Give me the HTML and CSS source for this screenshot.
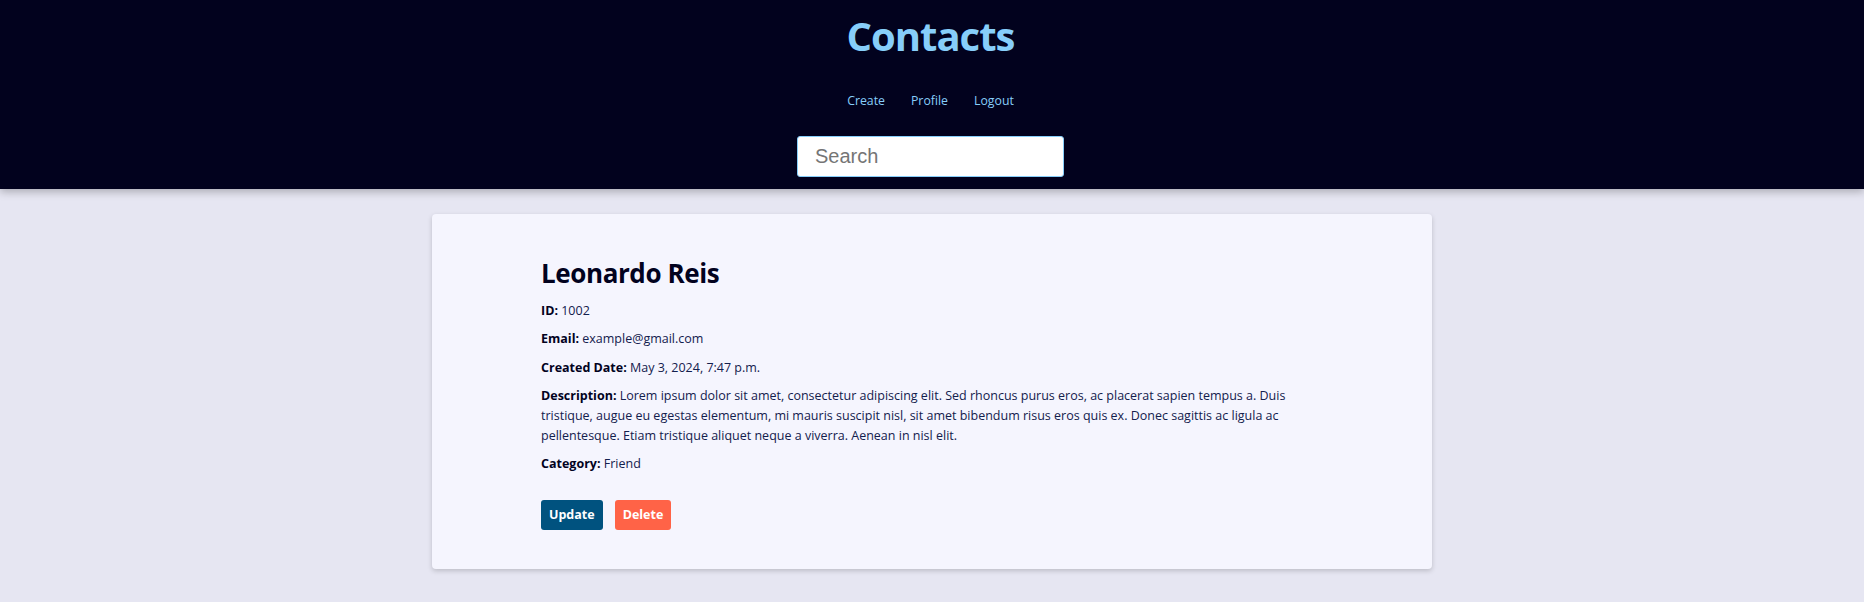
FILE: index.html
```html
<!DOCTYPE html>
<html lang="en">
<head>
<meta charset="utf-8">
<title>Contacts</title>
<link rel="stylesheet" href="styles.css">
</head>
<body>
<header class="site-header">
  <h1 class="site-title">Contacts</h1>
  <nav class="site-nav">
    <a href="#" class="nav-link">Create</a>
    <a href="#" class="nav-link">Profile</a>
    <a href="#" class="nav-link">Logout</a>
  </nav>
  <input class="search" type="text" placeholder="Search">
</header>
<main class="main">
  <section class="card">
    <div class="card-inner">
      <h2 class="contact-name">Leonardo Reis</h2>
      <p class="field"><strong class="label">ID:</strong> 1002</p>
      <p class="field"><strong class="label">Email:</strong> example@gmail.com</p>
      <p class="field"><strong class="label">Created Date:</strong> May 3, 2024, 7:47 p.m.</p>
      <p class="field"><strong class="label">Description:</strong> Lorem ipsum dolor sit amet, consectetur adipiscing elit. Sed rhoncus purus eros, ac placerat sapien tempus a. Duis tristique, augue eu egestas elementum, mi mauris suscipit nisl, sit amet bibendum risus eros quis ex. Donec sagittis ac ligula ac pellentesque. Etiam tristique aliquet neque a viverra. Aenean in nisl elit.</p>
      <p class="field"><strong class="label">Category:</strong> Friend</p>
      <div class="actions">
        <a href="#" class="btn btn-update">Update</a>
        <a href="#" class="btn btn-delete">Delete</a>
      </div>
    </div>
  </section>
</main>
</body>
</html>
```

FILE: styles.css
```css
* { box-sizing: border-box; }

body {
  margin: 0;
  background: #e6e6f2;
  font-family: "Open Sans", "Noto Sans", sans-serif;
  color: #02021e;
}

.site-header {
  background: #02021e;
  display: flex;
  flex-direction: column;
  align-items: center;
  padding: 16px 3px 12px 0;
  box-shadow: 0 3px 8px rgba(0, 0, 0, 0.25);
  position: relative;
}

.site-title {
  margin: 0;
  font-size: 40px;
  line-height: 40px;
  font-weight: 700;
  color: #87cefa;
  letter-spacing: -1px;
}

.site-nav {
  margin-top: 35px;
  display: flex;
  gap: 26px;
  line-height: 20px;
}

.nav-link {
  color: #87cefa;
  text-decoration: none;
  font-size: 12.3px;
}

.search {
  margin-top: 25px;
  width: 267px;
  height: 41px;
  border: 1px solid #87cefa;
  border-radius: 3px;
  padding: 0 17px;
  font-family: "Liberation Sans", Arial, sans-serif;
  font-size: 20px;
  background: #fff;
  color: #333;
}

.search::placeholder { color: #757575; }

.main {
  padding: 25px 0 30px;
}

.card {
  width: 1000px;
  margin: 0 auto;
  background: #f5f5fe;
  border-radius: 4px;
  box-shadow: 0 2px 5px rgba(0, 0, 0, 0.18);
  padding: 44px 111px 39px 109px;
}

.contact-name {
  margin: 0 0 12px;
  font-size: 26px;
  line-height: 31px;
  font-weight: 700;
  color: #02021e;
  letter-spacing: -0.4px;
}

.field {
  margin: 0 0 8.3px;
  font-size: 12.5px;
  line-height: 20px;
  color: #13204d;
}

.label {
  font-weight: 700;
  color: #02021e;
}

.actions {
  display: flex;
  gap: 12px;
  margin-top: 26px;
}

.btn {
  display: inline-block;
  height: 30px;
  line-height: 30px;
  padding: 0 8px;
  border-radius: 3px;
  color: #fff;
  font-weight: 700;
  font-size: 12.5px;
  text-decoration: none;
}

.btn-update { background: #00527f; }
.btn-delete { background: #ff6347; }
```
